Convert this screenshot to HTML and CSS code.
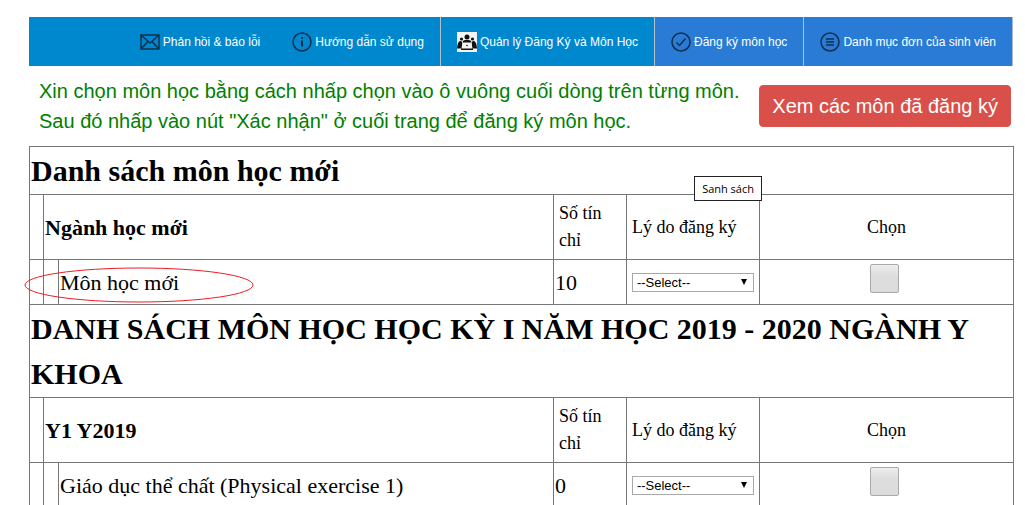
FILE: index.html
```html
<!DOCTYPE html>
<html lang="vi">
<head>
<meta charset="utf-8">
<meta name="viewport" content="width=device-width, initial-scale=1">
<title>Đăng ký môn học</title>
<link rel="stylesheet" href="styles.css">
</head>
<body>
<nav class="nav">
  <a class="nav-item" href="#"><svg class="icon" viewBox="0 0 20 20"><path d="M1 3h18v14H1zM1 3l9 8 9-8M1 17l7-7.500M19 17l-7-7.500"/></svg>Phản hồi &amp; báo lỗi</a>
  <a class="nav-item" href="#"><svg class="icon" viewBox="0 0 20 20"><circle cx="10" cy="10" r="9"/><path d="M10 8.500v6M10 5v2" stroke-width="2"/></svg>Hướng dẫn sử dụng</a>
  <a class="nav-item nav-item-split" href="#"><svg class="icon icon-people" viewBox="0 0 20 20"><path class="paper" d="M0 0h20v20H0z"/><circle cx="10" cy="5" r="2.500"/><circle cx="4.500" cy="7" r="1.600"/><circle cx="15.500" cy="7" r="1.600"/><path d="M5.500 11q0-3 3-3h3q3 0 3 3v2h-9zM0 16q0-4 2-6.500 2-1 3 .5v6.500H0zM20 16q0-4-2-6.500-2-1-3 .5v6.500h5z"/><path class="paper" d="M5.500 10.500h9l1 6h-11z"/><circle cx="10" cy="13.500" r=".8"/><path d="M4 16.500h12v1.500H4z"/></svg>Quản lý Đăng Ký và Môn Học</a>
  <a class="nav-item nav-item-split nav-item-alt" href="#"><svg class="icon" viewBox="0 0 20 20"><circle cx="10" cy="10" r="9"/><path d="M5.500 10.500l3 3 6-7"/></svg>Đăng ký môn học</a>
  <a class="nav-item nav-item-split nav-item-alt" href="#"><svg class="icon" viewBox="0 0 20 20"><circle cx="10" cy="10" r="9"/><path d="M6 7h8M6 10h8M6 13h8"/></svg>Danh mục đơn của sinh viên</a>
</nav>

<div class="intro">
  <p class="intro-text">Xin chọn môn học bằng cách nhấp chọn vào ô vuông cuối dòng trên từng môn.<br>Sau đó nhấp vào nút "Xác nhận" ở cuối trang để đăng ký môn học.</p>
  <button class="view-button" type="button">Xem các môn đã đăng ký</button>
</div>

<main class="courses">
  <table class="course-table">
    <colgroup><col class="col-indent"><col class="col-indent-inner"><col><col class="col-credits"><col class="col-reason"><col class="col-pick"></colgroup>
    <tbody>
      <tr><th class="list-title" colspan="6">Danh sách môn học mới</th></tr>
      <tr>
        <td></td>
        <th class="group-title" colspan="2">Ngành học mới</th>
        <th class="label">Số tín chỉ</th>
        <th class="label">Lý do đăng ký</th>
        <th class="label label-center">Chọn</th>
      </tr>
      <tr class="course">
        <td></td>
        <td></td>
        <td class="course-name">Môn học mới<svg class="ring" viewBox="0 0 230 36"><ellipse cx="115" cy="18" rx="114" ry="17"/></svg></td>
        <td>10</td>
        <td class="reason"><div class="select-box"><select class="select" aria-label="Lý do đăng ký Môn học mới"><option>--Select--</option></select><svg class="arrow" viewBox="0 0 6 6"><path d="M0 0h6L3 6z"/></svg></div></td>
        <td class="pick-cell"><input class="pick" type="checkbox" aria-label="Chọn Môn học mới"></td>
      </tr>
      <tr><th class="list-title" colspan="6">DANH SÁCH MÔN HỌC HỌC KỲ I NĂM HỌC 2019 - 2020 NGÀNH Y KHOA</th></tr>
      <tr>
        <td></td>
        <th class="group-title" colspan="2">Y1 Y2019</th>
        <th class="label">Số tín chỉ</th>
        <th class="label">Lý do đăng ký</th>
        <th class="label label-center">Chọn</th>
      </tr>
      <tr class="course">
        <td></td>
        <td></td>
        <td class="course-name">Giáo dục thể chất (Physical exercise 1)</td>
        <td>0</td>
        <td class="reason"><div class="select-box"><select class="select" aria-label="Lý do đăng ký Giáo dục thể chất"><option>--Select--</option></select><svg class="arrow" viewBox="0 0 6 6"><path d="M0 0h6L3 6z"/></svg></div></td>
        <td class="pick-cell"><input class="pick" type="checkbox" aria-label="Chọn Giáo dục thể chất"></td>
      </tr>
    </tbody>
  </table>
  <div class="tooltip" role="tooltip">Sanh sách</div>
</main>
</body>
</html>
```
FILE: styles.css
```css
* { box-sizing: border-box; }

body {
  margin: 0;
  padding: 17px 11px 0 29px;
  background: #fff;
  color: #000;
  font-family: "Liberation Serif", "Times New Roman", serif;
}

.nav {
  display: flex;
  justify-content: flex-end;
  margin-right: 1px;
  background: #0088cf;
  border-right: 1px solid #a9b8d4;
}

.nav-item {
  display: flex;
  align-items: center;
  gap: 3px;
  height: 49px;
  padding: 0 16px;
  color: #fff;
  font: 12px/20px "Liberation Sans", Arial, sans-serif;
  text-decoration: none;
  white-space: nowrap;
}

.nav-item-split { border-left: 1px solid #b4bfcb; }
.nav-item-alt { background: #2a7bd5; }

.icon {
  width: 20px;
  height: 20px;
  fill: none;
  stroke: #10304e;
  stroke-width: 1.5;
}

.icon-people { fill: #111; stroke: none; }
.paper { fill: #f4f4f4; }

.intro {
  display: flex;
  justify-content: space-between;
  align-items: center;
  padding: 10px 3px 10px 10px;
}

.intro-text {
  margin: 0;
  color: #008000;
  font: 20px/30px "Liberation Sans", Arial, sans-serif;
}

.view-button {
  padding: 6px 12px;
  border: 1px solid #d9534f;
  border-radius: 4px;
  background: #d94f49;
  color: #fff;
  font: 20px/28px "Liberation Sans", Arial, sans-serif;
  white-space: nowrap;
}

.courses { position: relative; }

.course-table {
  width: 100%;
  table-layout: fixed;
  border-collapse: collapse;
  font-size: 22px;
  line-height: 33px;
}

.course-table td,
.course-table th {
  padding: 1px;
  border: 1px solid #777;
  text-align: left;
  vertical-align: middle;
}

.col-indent { width: 14px; }
.col-indent-inner { width: 15px; }
.col-credits { width: 73px; }
.col-reason { width: 133px; }
.col-pick { width: 254px; }

.course-table .list-title {
  font-size: 30px;
  line-height: 45px;
}

.course-table .label {
  padding: 5px;
  font-size: 18px;
  font-weight: normal;
  line-height: 27px;
}

.course-table .label-center { text-align: center; }

.course-table .course { height: 45px; }
.course-table .course-name { position: relative; }
.course-table .reason { padding: 0 5px; }
.course-table .pick-cell { padding-right: 5px; }

.ring {
  position: absolute;
  left: -35px;
  top: 7px;
  width: 230px;
  height: 36px;
  fill: none;
  stroke: #ed1c24;
  pointer-events: none;
}

.select-box { position: relative; height: 19px; }

.select {
  display: block;
  width: 100%;
  height: 19px;
  padding: 0 4px;
  appearance: none;
  border: 1px solid #a9a9a9;
  border-radius: 0;
  background: #fff;
  color: #000;
  font: 13px/17px "Liberation Sans", Arial, sans-serif;
}

.arrow {
  position: absolute;
  top: 6px;
  right: 7px;
  width: 6px;
  height: 6px;
}

.pick {
  display: block;
  width: 29px;
  height: 29px;
  margin: 1px auto 9px;
  appearance: none;
  border: 1px solid #aaa;
  border-radius: 2px;
  background: linear-gradient(#eee, #ddd 40%, #dcdcdc);
}

.tooltip {
  position: absolute;
  top: 30px;
  right: 252px;
  padding: 3px 7px;
  border: 1px solid #222;
  background: #fff;
  font: 11px/17px "Open Sans", sans-serif;
}
```
